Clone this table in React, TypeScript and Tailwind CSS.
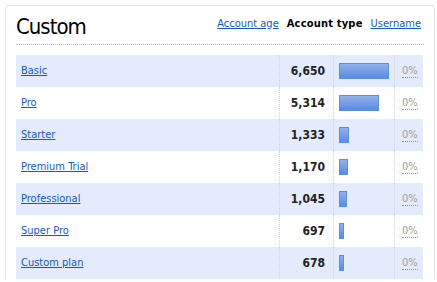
import React from "react"

const rows = [
  { name: "Basic", count: 6650 },
  { name: "Pro", count: 5314 },
  { name: "Starter", count: 1333 },
  { name: "Premium Trial", count: 1170 },
  { name: "Professional", count: 1045 },
  { name: "Super Pro", count: 697 },
  { name: "Custom plan", count: 678 },
]

const max = 6650

export default function App() {
  return (
    <div
      className="bg-white w-[437px] h-[282px] overflow-hidden"
      style={{ fontFamily: '"DejaVu Sans Condensed", "DejaVu Sans", sans-serif' }}
    >
      <div className="ml-[5px] mt-[5px] w-[430px] border-l border-t border-r border-[#e4e4e4] rounded-tl-[4px] rounded-tr-[4px] px-[10px]">
        {/* heading with sort links */}
        <div className="flex items-end justify-between h-[39px] border-b border-dotted border-[#bdbdbd]">
          <h1 className="text-[22px] leading-none text-black tracking-[-1px] pb-[6px]">Custom</h1>
          <div className="flex items-baseline gap-[8px] text-[11px] pb-[12px] pr-[3px]">
            <a href="#" className="text-[#1559b8] underline">Account age</a>
            <span className="text-black font-bold tracking-[0.2px]">Account type</span>
            <a href="#" className="text-[#1559b8] underline">Username</a>
          </div>
        </div>

        {/* table */}
        <div className="mt-[10px] w-[407px]">
          {rows.map((r, i) => (
            <div
              key={r.name}
              className={`grid grid-cols-[263px_54px_61px_29px] h-[32px] ${i % 2 === 0 ? "bg-[#e3ebfc]" : "bg-white"}`}
            >
              <div className="flex items-center pl-[5px]">
                <a href="#" className="text-[11px] text-[#1559b8] underline">{r.name}</a>
              </div>
              <div className="flex items-center justify-end pr-[8px] border-l border-dotted border-[#cfd3e0] text-[12px] font-bold text-[#222]">
                {r.count.toLocaleString("en-US")}
              </div>
              <div className="flex items-center pl-[5px] border-l border-dotted border-[#cfd3e0]">
                <div
                  className="h-[16px] bg-gradient-to-b from-[#8fb2ef] to-[#5a8be0] border border-[#5d8ddd]"
                  style={{ width: Math.max(5, Math.round((r.count / max) * 50)) }}
                />
              </div>
              <div className="flex items-center pl-[7px] border-l border-dotted border-[#cfd3e0]">
                <span className="text-[11px] text-[#a0a0a0] border-b border-dotted border-[#9a9a9a] leading-[13px]">0%</span>
              </div>
            </div>
          ))}
        </div>
      </div>
    </div>
  )
}
